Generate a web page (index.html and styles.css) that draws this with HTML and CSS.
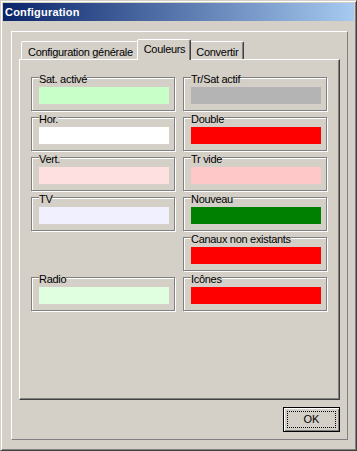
FILE: index.html
```html
<!DOCTYPE html>
<html>
<head>
  <meta charset="UTF-8">
  <link rel="stylesheet" href="styles.css">
</head>
<body>
  <div class="window">
    <div class="titlebar">Configuration</div>
    <div class="panel">
      <div class="tabs">
        <div class="tab-strip">
          <div class="tab">Configuration générale</div>
          <div class="tab active">Couleurs</div>
          <div class="tab">Convertir</div>
        </div>
        <div class="tab-page">
          <div class="color-grid">
            <fieldset class="group"><legend>Sat. activé</legend><div class="swatch sat-active"></div></fieldset>
            <fieldset class="group"><legend>Tr/Sat actif</legend><div class="swatch tr-sat"></div></fieldset>
            <fieldset class="group"><legend>Hor.</legend><div class="swatch hor"></div></fieldset>
            <fieldset class="group"><legend>Double</legend><div class="swatch red"></div></fieldset>
            <fieldset class="group"><legend>Vert.</legend><div class="swatch vert"></div></fieldset>
            <fieldset class="group"><legend>Tr vide</legend><div class="swatch tr-vide"></div></fieldset>
            <fieldset class="group"><legend>TV</legend><div class="swatch tv"></div></fieldset>
            <fieldset class="group"><legend>Nouveau</legend><div class="swatch nouveau"></div></fieldset>
            <fieldset class="group right-col"><legend>Canaux non existants</legend><div class="swatch red"></div></fieldset>
            <fieldset class="group"><legend>Radio</legend><div class="swatch radio"></div></fieldset>
            <fieldset class="group"><legend>Icônes</legend><div class="swatch red"></div></fieldset>
          </div>
        </div>
      </div>
      <div class="buttons">
        <button class="btn default"><span>OK</span></button>
      </div>
    </div>
  </div>
</body>
</html>
```

FILE: styles.css
```css
* {
  box-sizing: border-box;
}
body {
  margin: 0;
  background: #d4d0c8;
  font-family: "Liberation Sans", Arial, sans-serif;
  font-size: 11px;
  letter-spacing: -0.3px;
  color: #000;
}
.window {
  width: 357px;
  height: 451px;
  display: flex;
  flex-direction: column;
  padding: 2px;
  background: #d4d0c8;
  border: 1px solid;
  border-color: #d4d0c8 #404040 #404040 #d4d0c8;
  box-shadow: inset 1px 1px #fff, inset -1px -1px #808080;
}
.titlebar {
  flex: none;
  height: 18px;
  line-height: 18px;
  padding-left: 2px;
  color: #fff;
  font-weight: bold;
  letter-spacing: 0.2px;
  background: linear-gradient(to right, #0a246a, #a6caf0);
}
.panel {
  flex: 1;
  display: flex;
  flex-direction: column;
  gap: 7px;
  margin: 10px 6px 8px 8px;
  padding: 7px;
  border: 1px solid;
  border-color: #fff #808080 #808080 #fff;
}
.tab-strip {
  display: flex;
  align-items: flex-end;
  height: 20px;
  padding-left: 2px;
}
.tab {
  height: 18px;
  padding: 4px 5px 0 6px;
  line-height: 13px;
  white-space: nowrap;
  border: 1px solid;
  border-bottom: none;
  border-color: #fff #404040 transparent #fff;
  border-radius: 2px 2px 0 0;
  box-shadow: inset -1px 0 #808080;
}
.tab.active {
  position: relative;
  z-index: 1;
  height: 21px;
  margin: 0 -2px -1px;
  padding-top: 3px;
  background: #d4d0c8;
}
.tab-page {
  height: 341px;
  padding: 9px 0 0 11px;
  border: 1px solid;
  border-color: #fff #404040 #404040 #fff;
  box-shadow: inset -1px -1px #808080;
}
.color-grid {
  display: grid;
  grid-template-columns: 144px 144px;
  grid-auto-rows: 40px;
  column-gap: 8px;
}
.group {
  min-width: 0;
  margin: 0 0 -2px;
  padding: 1px 5px 6px 7px;
  border: 1px solid #808080;
  box-shadow: 1px 1px #fff, inset 1px 1px #fff;
}
.group.right-col {
  grid-column: 2;
}
.group legend {
  padding: 4px 0 0;
  line-height: 13px;
  background: #d4d0c8;
  background-clip: content-box;
}
.swatch {
  height: 17px;
}
.sat-active { background: #c8ffc8; }
.tr-sat { background: #b4b4b4; }
.hor { background: #fff; }
.red { background: #ff0000; }
.vert { background: #ffe0e0; }
.tr-vide { background: #ffc8c8; }
.tv { background: #f0f0ff; }
.nouveau { background: #008000; }
.radio { background: #e0ffe0; }
.buttons {
  display: flex;
  justify-content: flex-end;
}
.btn {
  width: 57px;
  height: 25px;
  padding: 3px;
  font: inherit;
  letter-spacing: 0;
  background: #d4d0c8;
  border: 1px solid #000;
  box-shadow: inset 1px 1px #fff, inset -1px -1px #808080;
}
.btn span {
  display: block;
  height: 100%;
  line-height: 15px;
  text-align: center;
  border: 1px dotted #000;
}
```
